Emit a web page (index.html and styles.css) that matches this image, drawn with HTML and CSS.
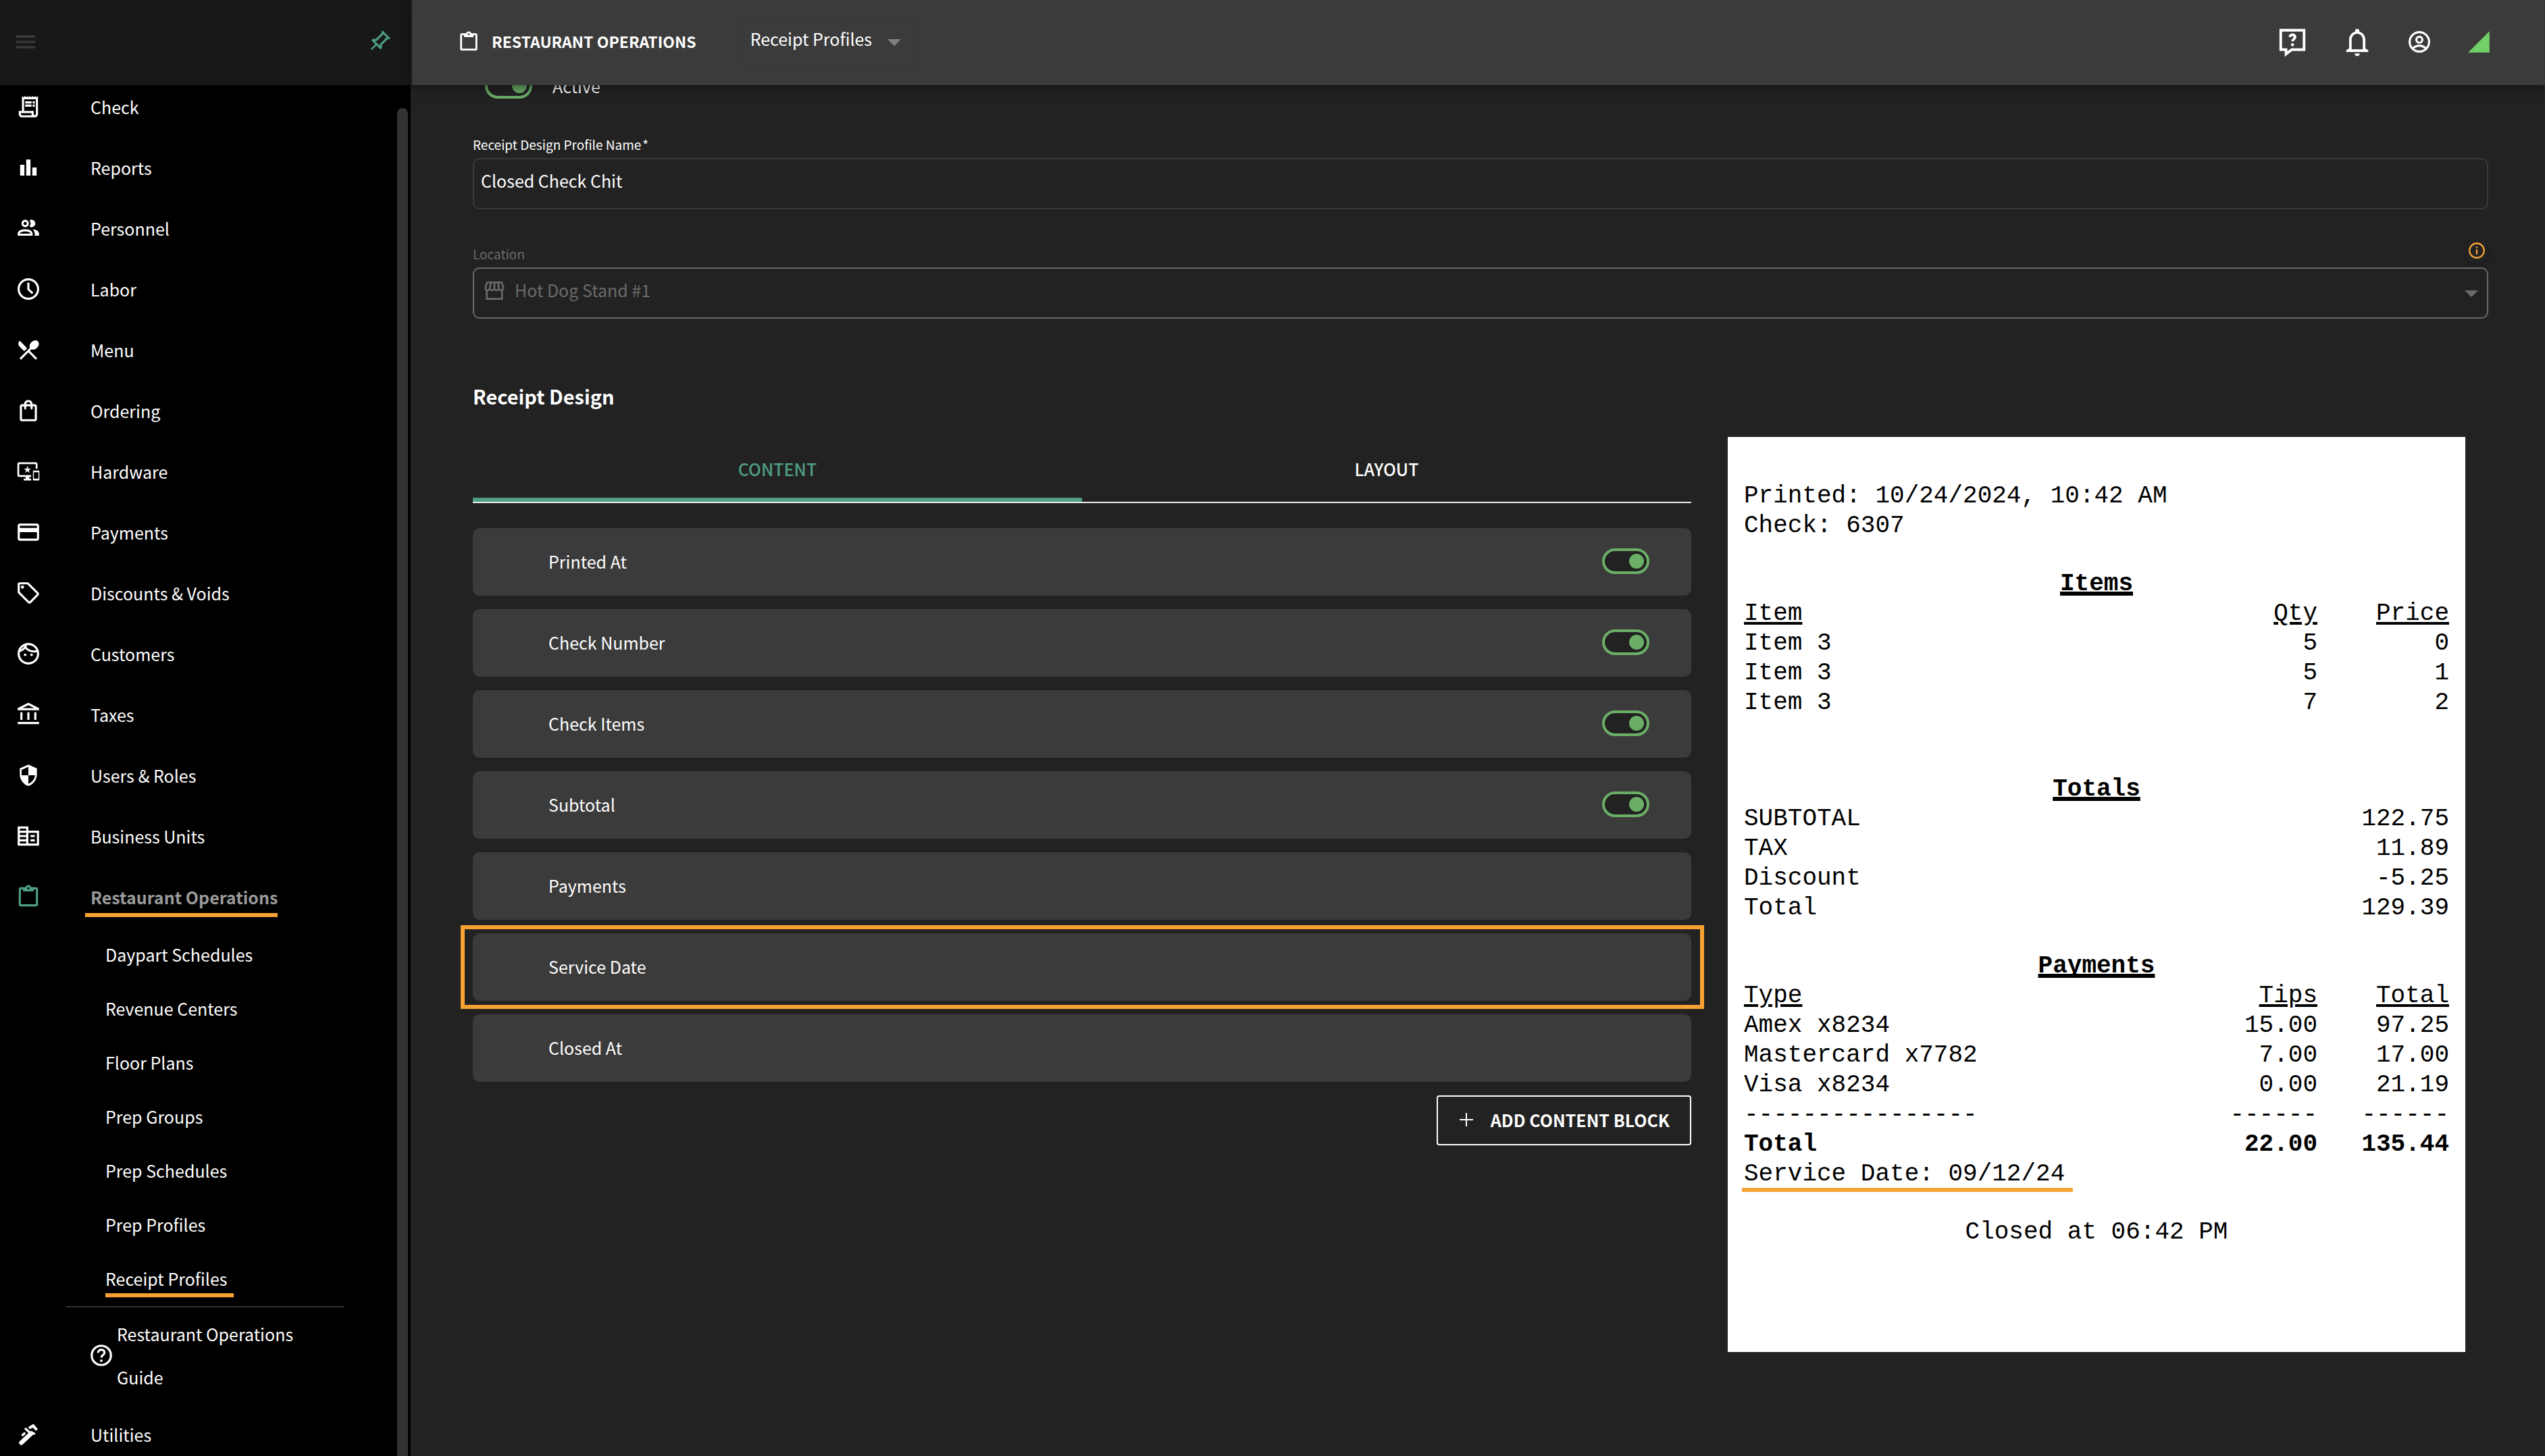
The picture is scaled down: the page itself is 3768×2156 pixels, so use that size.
FILE: index.html
```
<!DOCTYPE html>
<html lang="en">
    <head>
        <meta charset="utf-8">
        <title>Receipt Profiles</title>
        <link rel="stylesheet" href="styles.css">
    </head>
    <body>

<aside class="sidebar">
  <div class="sidebar-top">
    <button class="icon-btn menu-btn" aria-label="Menu">
      <svg class="icon" viewBox="0 0 24 24"><path d="M3 6h18v2H3zM3 11h18v2H3zM3 16h18v2H3z"/></svg>
    </button>
    <button class="icon-btn pin-btn" aria-label="Pin menu">
      <svg class="icon" viewBox="0 0 24 24"><path transform="rotate(45 12 12)" d="M16 12V4h1V2H7v2h1v8l-2 2v2h5.2v6h1.6v-6H18v-2l-2-2M8.8 14l1.2-1.2V4h4v8.8l1.2 1.2H8.8z"/></svg>
    </button>
  </div>

  <nav class="nav">
    <a class="nav-item" href="#"><svg class="icon" viewBox="0 0 24 24"><path d="M19.5 3.2L18.3 2l-1.2 1.2L15.9 2l-1.2 1.2L13.5 2l-1.2 1.2L11.1 2 9.9 3.2 8.7 2 7.4 3.2 6 2v14H3v3c0 1.66 1.34 3 3 3h12c1.66 0 3-1.34 3-3V2zM15 20H6c-.55 0-1-.45-1-1v-1h10v2zm4-1c0 .55-.45 1-1 1s-1-.45-1-1v-3H8V5h11v14zM9 7h6v2H9zm7 0h2v2h-2zm-7 3h6v2H9zm7 0h2v2h-2z"/></svg>Check</a>
    <a class="nav-item" href="#"><svg class="icon" viewBox="0 0 24 24"><path d="M4.3 9.5h4v10h-4zM10 4.5h4v15h-4zM15.7 12h4v7.5h-4z"/></svg>Reports</a>
    <a class="nav-item" href="#"><svg class="icon" viewBox="0 0 24 24"><path d="M13.07 10.41a5 5 0 0 0 0-5.82A3.39 3.39 0 0 1 15 4a3.5 3.5 0 0 1 0 7 3.39 3.39 0 0 1-1.93-.59M5.5 7.5A3.5 3.5 0 1 1 9 11a3.5 3.5 0 0 1-3.5-3.5m2 0A1.5 1.5 0 1 0 9 6a1.5 1.5 0 0 0-1.5 1.5M16 17v2H2v-2s0-4 7-4 7 4 7 4m-2 0c-.14-.78-1.33-2-5-2s-4.93 1.31-5 2m11.95-4A5.32 5.32 0 0 1 18 17v2h4v-2s0-3.63-6.06-4z"/></svg>Personnel</a>
    <a class="nav-item" href="#"><svg class="icon line" viewBox="0 0 24 24"><circle cx="12" cy="12" r="9.1"/><path d="M12 6v6.2l4 3.8"/></svg>Labor</a>
    <a class="nav-item" href="#"><svg class="icon" viewBox="0 0 24 24"><path d="M8.1 13.34l2.83-2.83L3.91 3.5c-1.56 1.56-1.56 4.09 0 5.66l4.19 4.18zm6.78-1.81c1.53.71 3.68.21 5.27-1.38 1.91-1.91 2.28-4.65.81-6.12-1.46-1.46-4.2-1.1-6.12.81-1.59 1.59-2.09 3.74-1.38 5.27L3.7 19.87l1.41 1.41L12 14.41l6.88 6.88 1.41-1.41L13.41 13l1.47-1.47z"/></svg>Menu</a>
    <a class="nav-item" href="#"><svg class="icon" viewBox="0 0 24 24"><path d="M18 6h-2c0-2.21-1.79-4-4-4S8 3.79 8 6H6c-1.1 0-2 .9-2 2v12c0 1.1.9 2 2 2h12c1.1 0 2-.9 2-2V8c0-1.1-.9-2-2-2zm-6-2c1.1 0 2 .9 2 2h-4c0-1.1.9-2 2-2zm6 16H6V8h2v2c0 .55.45 1 1 1s1-.45 1-1V8h4v2c0 .55.45 1 1 1s1-.45 1-1V8h2v12z"/></svg>Ordering</a>
    <a class="nav-item" href="#"><svg class="icon" viewBox="-2 -2 28 28"><path d="M23 11.01L18 11c-.55 0-1 .45-1 1v9c0 .55.45 1 1 1h5c.55 0 1-.45 1-1v-9c0-.55-.45-.99-1-.99zM23 20h-5v-7h5v7zM20 2H2C.89 2 0 2.89 0 4v12c0 1.1.89 2 2 2h7v2H7v2h8v-2h-2v-2h2v-2H2V4h18v5h2V4c0-1.11-.9-2-2-2zm-8.03 7L11 6l-.97 3H7l2.47 1.76-.94 2.91 2.47-1.8 2.47 1.8-.94-2.91L15 9h-3.03z"/></svg>Hardware</a>
    <a class="nav-item" href="#"><svg class="icon" viewBox="0 0 24 24"><path d="M20 4H4c-1.11 0-1.99.89-1.99 2L2 18c0 1.11.89 2 2 2h16c1.11 0 2-.89 2-2V6c0-1.11-.89-2-2-2zm0 14H4v-6h16v6zm0-10H4V6h16v2z"/></svg>Payments</a>
    <a class="nav-item" href="#"><svg class="icon" viewBox="0 0 24 24"><path d="M21.41 11.58l-9-9A2 2 0 0 0 11 2H4a2 2 0 0 0-2 2v7a2 2 0 0 0 .59 1.42l9 9A2 2 0 0 0 13 22a2 2 0 0 0 1.41-.59l7-7A2 2 0 0 0 22 13a2 2 0 0 0-.59-1.42M13 20l-9-9V4h7l9 9M6.5 5A1.5 1.5 0 1 1 5 6.5 1.5 1.5 0 0 1 6.5 5z"/></svg>Discounts &amp; Voids</a>
    <a class="nav-item" href="#"><svg class="icon line" viewBox="0 0 24 24"><circle cx="12" cy="12" r="9.1"/><path d="M3.2 9.8C6.5 8.9 9 6.8 10 3.4M9 5.6c2.5 3.6 7 5.1 11.7 3.9"/><circle class="dot" cx="9" cy="13" r="1.2"/><circle class="dot" cx="15" cy="13" r="1.2"/></svg>Customers</a>
    <a class="nav-item" href="#"><svg class="icon" viewBox="0 0 24 24"><path d="M4.5 10h2v7h-2zM11 10h2v7h-2zM17.5 10h2v7h-2zM2 19h20v2H2zM12 3.26L17.5 6h-11L12 3.26M12 1L2 6v2h20V6L12 1z"/></svg>Taxes</a>
    <a class="nav-item" href="#"><svg class="icon" viewBox="0 0 24 24"><path d="M12 12h6.3c-.5 3.7-3 6.9-6.3 8V12H5.7V6.9L12 4.1M12 2L4 5.5V11c0 5 3.4 9.7 8 11 4.6-1.3 8-6 8-11V5.5L12 2z"/></svg>Users &amp; Roles</a>
    <a class="nav-item" href="#"><svg class="icon" viewBox="0 0 24 24"><path fill-rule="evenodd" d="M12 7V3H2v18h20V7zM10 19H4v-2h6zm0-4H4v-2h6zm0-4H4V9h6zm0-4H4V5h6zm10 12h-8V9h8zM18 11h-4v2h4zm0 4h-4v2h4z"/></svg>Business Units</a>
    <a class="nav-item current" href="#"><svg class="icon" viewBox="0 0 24 24"><path d="M19 3h-4.18C14.4 1.84 13.3 1 12 1s-2.4.84-2.82 2H5a2 2 0 0 0-2 2v14a2 2 0 0 0 2 2h14a2 2 0 0 0 2-2V5a2 2 0 0 0-2-2m-7 0a1 1 0 1 1 0 2 1 1 0 0 1 0-2M7 7h10V5h2v14H5V5h2z"/></svg><span class="marked wide">Restaurant Operations</span></a>

    <div class="subnav">
      <a class="sub-item" href="#">Daypart Schedules</a>
      <a class="sub-item" href="#">Revenue Centers</a>
      <a class="sub-item" href="#">Floor Plans</a>
      <a class="sub-item" href="#">Prep Groups</a>
      <a class="sub-item" href="#">Prep Schedules</a>
      <a class="sub-item" href="#">Prep Profiles</a>
      <a class="sub-item" href="#"><span class="marked sub">Receipt Profiles</span></a>
    </div>

    <a class="guide" href="#">
      <svg class="icon line" viewBox="0 0 24 24"><circle cx="12" cy="12" r="9"/><path d="M9 9.6c0-1.7 1.3-2.9 3-2.9s3 1.1 3 2.7c0 2-2.9 2.2-2.9 4.6"/><circle class="dot" cx="12" cy="17" r="1.2"/></svg>
      <span>Restaurant Operations Guide</span>
    </a>

    <a class="nav-item" href="#"><svg class="icon line" viewBox="0 0 24 24"><path stroke-width="4.2" stroke-linecap="round" d="M5.4 19.8L14.8 11"/><path stroke-linecap="round" stroke-width="2.2" d="M9.5 6.8l3.5 3.3 4.4 1.2M6.6 12.6l1.7-1.5"/><path stroke-width="2.6" d="M12.6 6.2l3.9-2.3 3.4 4"/></svg>Utilities</a>
  </nav>

  <div class="scrollbar"></div>
</aside>

<div class="page">
  <header class="topbar">
    <svg class="icon clip" viewBox="0 0 24 24"><path d="M19 3h-4.18C14.4 1.84 13.3 1 12 1s-2.4.84-2.82 2H5a2 2 0 0 0-2 2v14a2 2 0 0 0 2 2h14a2 2 0 0 0 2-2V5a2 2 0 0 0-2-2m-7 0a1 1 0 1 1 0 2 1 1 0 0 1 0-2M7 7h10V5h2v14H5V5h2z"/></svg>
    <h1 class="section">RESTAURANT OPERATIONS</h1>
    <div class="select page-select">
      <select aria-label="Page"><option>Receipt Profiles</option></select>
      <svg class="arrow" viewBox="0 0 20 10"><path d="M0 0h20L10 10z"/></svg>
    </div>

    <div class="tools">
      <button class="icon-btn" aria-label="Help">
        <svg class="icon-lg line" viewBox="0 0 24 24"><path d="M3 3h18v15H11.5l-4.4 3.4V18H3z"/><path d="M9.9 8.2c.3-1.1 1.1-1.7 2.2-1.7 1.2 0 2 .7 2 1.7 0 1.4-1.9 1.5-1.9 3.4"/><circle class="dot" cx="12.1" cy="14.2" r="1.2"/></svg>
      </button>
      <button class="icon-btn" aria-label="Notifications">
        <svg class="icon-lg" viewBox="0 0 24 24"><path d="M10 21h4c0 1.1-.9 2-2 2s-2-.9-2-2M20.5 18.5v1.3h-17v-1.3L5.7 17v-6.5c0-3.2 1.9-5.7 4.7-6.5V3.5a1.6 1.6 0 0 1 3.2 0V4c2.8.8 4.7 3.3 4.7 6.5V17zM16.3 10.5c0-2.7-1.8-4.7-4.3-4.7s-4.3 2-4.3 4.7V17.7h8.6z"/></svg>
      </button>
      <button class="icon-btn" aria-label="Account">
        <svg class="icon line" viewBox="0 0 24 24"><circle cx="12" cy="12" r="9.1"/><circle cx="12" cy="10" r="2.8"/><path d="M6 18.2c1.5-1.7 3.5-2.6 6-2.6s4.5.9 6 2.6"/></svg>
      </button>
      <svg class="icon brand" viewBox="0 0 24 24"><path d="M22 2v20H2z"/></svg>
    </div>
  </header>

  <main class="content">
    <div class="active-row">
      <input class="toggle" type="checkbox" id="active" checked>
      <label for="active">Active</label>
    </div>

    <div class="field">
      <div class="field-top"><label for="name">Receipt Design Profile Name<span class="star">*</span></label></div>
      <input class="text-input" type="text" id="name" value="Closed Check Chit">
    </div>

    <div class="field disabled">
      <div class="field-top">
        <label for="location">Location</label>
        <button class="icon-btn info" aria-label="About location">
          <svg viewBox="0 0 24 24"><circle cx="12" cy="12" r="9.2"/><path d="M12 10.8V17M12 7v2"/></svg>
        </button>
      </div>
      <div class="select location-select">
        <svg class="store" viewBox="0 0 24 22"><path d="M4 2h16l2 6v.4a2.4 2.4 0 0 1-5 0 2.5 2.5 0 0 1-5 0 2.5 2.5 0 0 1-5 0 2.4 2.4 0 0 1-5 0V8zM3.5 11v9.5h17V11M7 8.4L8 2M12 8.4V2M17 8.4L16 2"/></svg>
        <select id="location" disabled><option>Hot Dog Stand #1</option></select>
        <svg class="arrow" viewBox="0 0 20 10"><path d="M0 0h20L10 10z"/></svg>
      </div>
    </div>

    <h2 class="title">Receipt Design</h2>

    <div class="design">
      <section class="blocks">
        <div class="tabs" role="tablist">
          <button class="tab selected" role="tab" aria-selected="true">CONTENT</button>
          <button class="tab" role="tab" aria-selected="false">LAYOUT</button>
        </div>

        <div class="block"><label for="b1">Printed At</label><input class="toggle" type="checkbox" id="b1" checked></div>
        <div class="block"><label for="b2">Check Number</label><input class="toggle" type="checkbox" id="b2" checked></div>
        <div class="block"><label for="b3">Check Items</label><input class="toggle" type="checkbox" id="b3" checked></div>
        <div class="block"><label for="b4">Subtotal</label><input class="toggle" type="checkbox" id="b4" checked></div>
        <div class="block">Payments</div>
        <div class="block highlight">Service Date</div>
        <div class="block">Closed At</div>

        <button class="add-btn">
          <svg viewBox="0 0 20 20"><path d="M10 0v20M0 10h20"/></svg>
          ADD CONTENT BLOCK
        </button>
      </section>

      <section class="receipt">
        <p>Printed: 10/24/2024, 10:42 AM</p>
        <p>Check: 6307</p>

        <h3 class="gap">Items</h3>
        <table>
          <tr><th>Item</th><th>Qty</th><th>Price</th></tr>
          <tr><td>Item 3</td><td>5</td><td>0</td></tr>
          <tr><td>Item 3</td><td>5</td><td>1</td></tr>
          <tr><td>Item 3</td><td>7</td><td>2</td></tr>
        </table>

        <h3 class="gap big">Totals</h3>
        <table>
          <tr><td>SUBTOTAL</td><td></td><td>122.75</td></tr>
          <tr><td>TAX</td><td></td><td>11.89</td></tr>
          <tr><td>Discount</td><td></td><td>-5.25</td></tr>
          <tr><td>Total</td><td></td><td>129.39</td></tr>
        </table>

        <h3 class="gap">Payments</h3>
        <table>
          <tr><th>Type</th><th>Tips</th><th>Total</th></tr>
          <tr><td>Amex x8234</td><td>15.00</td><td>97.25</td></tr>
          <tr><td>Mastercard x7782</td><td>7.00</td><td>17.00</td></tr>
          <tr><td>Visa x8234</td><td>0.00</td><td>21.19</td></tr>
          <tr><td>----------------</td><td>------</td><td>------</td></tr>
          <tr class="sum"><td>Total</td><td>22.00</td><td>135.44</td></tr>
        </table>
        <p><span class="marked date">Service Date: 09/12/24</span></p>

        <p class="gap closed">Closed at 06:42 PM</p>
      </section>
    </div>
  </main>
</div>

    </body>
</html>
```
FILE: styles.css
```
* {
  box-sizing: border-box;
}

body {
  background: #222;
  color: #fff;
  display: grid;
  font: 400 25px/40px "Source Sans Pro", "Noto Sans CJK SC", sans-serif;
  grid-template-columns: 610px 1fr;
  height: 100vh;
  margin: 0;
  overflow: hidden;
}

h1, h2, h3, p {
  margin: 0;
}

a {
  color: inherit;
  text-decoration: none;
}

button, input, select {
  color: inherit;
  font: inherit;
  margin: 0;
}

button {
  background: none;
  border: 0;
  cursor: pointer;
  padding: 0;
}

svg {
  display: block;
  fill: currentColor;
  flex: none;
}

.icon {
  height: 38px;
  width: 38px;
}

.icon-lg {
  height: 46px;
  width: 46px;
}

.line {
  fill: none;
  stroke: currentColor;
  stroke-width: 2;
}

.dot {
  fill: currentColor;
  stroke: none;
}

/* orange marker under a text */
.marked {
  position: relative;
}

.marked::after {
  background: #f7a233;
  content: "";
  height: 6px;
  left: 0;
  position: absolute;
  right: 0;
  top: 100%;
}

.wide::after {
  left: -8px;
  margin-top: 4px;
}

.sub::after {
  margin-top: 2px;
  right: -10px;
}

.date::after {
  left: -3px;
  right: -12px;
}


/* sidebar */
.sidebar {
  background: #000;
  border-right: 2px solid #222;
  height: 100vh;
  overflow: hidden;
  position: relative;
}

.sidebar-top {
  align-items: center;
  background: #181818;
  display: flex;
  height: 126px;
  justify-content: space-between;
  padding: 0 28px 3px 19px;
  position: relative;
  z-index: 1;
}

.menu-btn {
  color: #3c3c3c;
}

.pin-btn {
  color: #4f9e84;
}

.nav {
  margin-top: -12px;
}

.nav-item {
  align-items: center;
  display: flex;
  gap: 73px;
  height: 90px;
  padding: 0 0 2px 23px;
}

.current {
  color: #9b9b9b;
  font-weight: 700;
}

  .current .icon {
    color: #4f9e84;
  }

.subnav {
  border-bottom: 2px solid #333;
  margin: 0 99px 0 98px;
}

.sub-item {
  align-items: center;
  display: flex;
  height: 80px;
  padding: 0 0 2px 58px;
}

.guide {
  align-items: center;
  display: flex;
  gap: 4px;
  line-height: 64px;
  padding: 7px 130px 9px 131px;
}

.scrollbar {
  background: #333;
  border-radius: 8px 8px 0 0;
  bottom: 0;
  position: absolute;
  right: 4px;
  top: 160px;
  width: 16px;
}


/* top bar */
.page {
  min-width: 0;
}

.topbar {
  align-items: center;
  background: #3b3b3b;
  box-shadow: 0 4px 16px rgba(0, 0, 0, .5);
  display: flex;
  height: 126px;
  padding: 0 79px 2px 67px;
  position: relative;
  z-index: 1;
}

.clip {
  height: 34px;
  width: 34px;
}

.section {
  font-size: 23px;
  font-weight: 700;
  margin-left: 17px;
  padding-bottom: 2px;
}

.select {
  display: flex;
  position: relative;
}

  .select select {
    appearance: none;
    background: none;
    border: 2px solid #3a3a3a;
    border-radius: 10px;
    flex: 1;
    height: 76px;
    opacity: 1;
    padding: 0 60px 10px 10px;
  }

.arrow {
  fill: #808080;
  height: 10px;
  position: absolute;
  right: 15px;
  top: 34px;
  width: 20px;
}

.page-select {
  margin-left: 68px;
  width: 250px;
}

.tools {
  align-items: center;
  display: flex;
  gap: 50px;
  margin-left: auto;
}

.brand {
  color: #72d069;
}


/* form */
.content {
  padding: 0 84px 0 90px;
}

.active-row {
  align-items: center;
  display: flex;
  gap: 30px;
  height: 38px;
  margin: -18px 0 44px 18px;
}

.toggle {
  appearance: none;
  background: #222;
  border: 4px solid #6bae67;
  border-radius: 19px;
  height: 38px;
  padding: 4px;
  width: 70px;
}

  .toggle::before {
    background: #6bae67;
    border-radius: 50%;
    content: "";
    display: block;
    height: 22px;
    margin-left: auto;
    width: 22px;
  }

.field {
  margin-bottom: 42px;
}

.field-top {
  align-items: flex-end;
  display: flex;
  font-size: 19px;
  height: 38px;
  justify-content: space-between;
  line-height: 28px;
  margin-bottom: 6px;
}

.star {
  margin-left: 2px;
}

.text-input {
  background: none;
  border: 2px solid #3a3a3a;
  border-radius: 10px;
  display: block;
  height: 76px;
  padding: 0 10px 10px;
  width: 100%;
}

.disabled {
  color: #6a6a6a;
  margin-bottom: 94px;
}

  .disabled select {
    border-color: #6a6a6a;
    padding-left: 60px;
  }

  .disabled .arrow {
    fill: #6a6a6a;
  }

.info {
  align-items: center;
  border-radius: 50%;
  box-shadow: 0 3px 6px rgba(0, 0, 0, .25);
  color: #f0a035;
  display: flex;
  height: 38px;
  justify-content: center;
  width: 34px;
}

  .info svg {
    fill: none;
    height: 28px;
    stroke: currentColor;
    stroke-width: 2;
    width: 28px;
  }

.store {
  fill: none;
  height: 30px;
  left: 16px;
  position: absolute;
  stroke: currentColor;
  stroke-width: 2;
  top: 19px;
  width: 32px;
}

.title {
  font-size: 29px;
  font-weight: 700;
  margin-bottom: 41px;
}


/* receipt design */
.design {
  align-items: flex-start;
  display: grid;
  gap: 54px;
  grid-template-columns: 1804fr 1092fr;
  padding-right: 34px;
}

.blocks {
  display: flex;
  flex-direction: column;
  gap: 20px;
}

.tabs {
  border-bottom: 2px solid #eee;
  display: grid;
  grid-template-columns: 1fr 1fr;
  margin-bottom: 17px;
}

.tab {
  border-bottom: 6px solid transparent;
  font-weight: 500;
  height: 96px;
  padding-top: 4px;
}

.selected {
  border-color: #4f9e84;
  color: #4f9e84;
}

.block {
  align-items: center;
  background: #3b3b3b;
  border-radius: 10px;
  display: flex;
  height: 100px;
  justify-content: space-between;
  padding: 0 62px 2px 112px;
  position: relative;
}

.highlight::after {
  border: 6px solid #f7a233;
  content: "";
  inset: -12px -19px -12px -18px;
  position: absolute;
}

.add-btn {
  align-items: center;
  align-self: flex-end;
  border: 2px solid #fff;
  border-radius: 4px;
  display: flex;
  font-weight: 700;
  gap: 26px;
  height: 74px;
  padding: 0 30px 2px 32px;
}

  .add-btn svg {
    height: 20px;
    stroke: currentColor;
    stroke-width: 2;
    width: 20px;
  }

.receipt {
  background: #fff;
  color: #000;
  font: 400 36px/44px "Courier New", "Liberation Mono", monospace;
  padding: 66px 24px 155px;
}

  .receipt h3 {
    font-size: 36px;
    text-align: center;
    text-decoration: underline 6px;
    text-decoration-skip-ink: none;
    text-underline-offset: 2px;
  }

  .receipt table {
    border-collapse: collapse;
    width: 100%;
  }

  .receipt td,
  .receipt th {
    font-weight: 400;
    padding: 0;
    text-align: right;
  }

  .receipt th {
    text-decoration: underline 4px;
    text-underline-offset: 3px;
  }

  .receipt td:first-child,
  .receipt th:first-child {
    text-align: left;
  }

  .receipt td:last-child,
  .receipt th:last-child {
    width: 195px;
  }

  .receipt .sum td {
    font-weight: 700;
  }

  .receipt .gap {
    margin-top: 42px;
  }

  .receipt .big {
    margin-top: 84px;
  }

.closed {
  text-align: center;
}
```
